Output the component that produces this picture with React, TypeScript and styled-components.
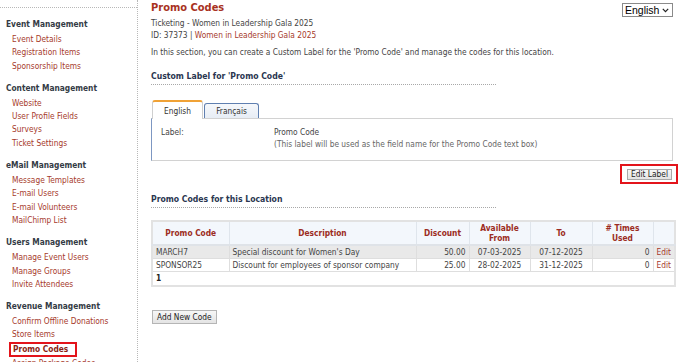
import React from "react";
import styled, { createGlobalStyle } from "styled-components";

const Global = createGlobalStyle`
  html, body { margin: 0; padding: 0; background: #fff; }
  body {
    font-family: "DejaVu Sans Condensed", "DejaVu Sans", Verdana, sans-serif;
    font-size: 8.3px;
    color: #444;
  }
  * { box-sizing: border-box; }
`;

const RED = "#a63a2c";
const NAVY = "#2a3650";

const Page = styled.div`
  display: flex;
  width: 688px;
  height: 362px;
  overflow: hidden;
`;

const Sidebar = styled.nav`
  width: 138px;
  flex: none;
  border-right: 1px dotted #b8b8b8;
  padding-top: 7px;
`;

const TopRule = styled.div`
  border-top: 1px dotted #b8b8b8;
  margin-bottom: 10px;
`;

const Group = styled.div`
  margin-bottom: 9px;
`;

const GroupTitle = styled.div`
  font-weight: bold;
  color: #343b45;
  line-height: 13px;
  padding-left: 6px;
  margin-bottom: 2px;
`;

const NavItem = styled.a<{ $active?: boolean }>`
  display: block;
  padding-left: 12px;
  line-height: 13.3px;
  color: ${RED};
  text-decoration: none;
  white-space: nowrap;
  font-weight: ${(p) => (p.$active ? "bold" : "normal")};
`;

const Highlight = styled.span`
  display: inline-block;
  border: 2px solid #e3141b;
  margin-left: -3px;
  padding: 0 7px 0 2px;
  line-height: 11px;
  color: #8a1d12;
`;

const Main = styled.main`
  flex: 1;
  padding: 0 15px 0 13px;
  min-width: 0;
`;

const Header = styled.div`
  display: flex;
  justify-content: space-between;
  align-items: flex-start;
`;

const Title = styled.h1`
  margin: 0 0 2px;
  font-size: 11px;
  line-height: 16px;
  color: #a8321e;
  font-weight: bold;
`;

const SubLine = styled.div`
  line-height: 11.5px;
  color: #444;
`;

const Link = styled.a`
  color: ${RED};
  text-decoration: none;
`;

const SelectWrap = styled.div`
  position: relative;
  margin-top: 3px;
  width: 51px;
  height: 14px;
`;

const LangSelect = styled.select`
  appearance: none;
  -webkit-appearance: none;
  width: 100%;
  height: 100%;
  font-family: "Liberation Sans", Arial, sans-serif;
  font-size: 10.5px;
  line-height: 12px;
  padding: 0 0 0 2px;
  border: 1px solid #8a8a8a;
  border-radius: 0;
  color: #000;
  background: #fff;
  outline: none;
`;

const Chevron = styled.svg`
  position: absolute;
  right: 4px;
  top: 5px;
  width: 7px;
  height: 5px;
  pointer-events: none;
`;

const Intro = styled.p`
  margin: 5px 0 0;
  line-height: 12px;
`;

const SectionHeading = styled.h2<{ $top: number }>`
  margin: ${(p) => p.$top}px 0 0;
  width: 345px;
  font-size: 8.6px;
  line-height: 12px;
  font-weight: bold;
  color: ${NAVY};
  padding-bottom: 2px;
  border-bottom: 1px dotted #a8a8a8;
`;

const Tabs = styled.div`
  display: flex;
  align-items: flex-end;
  gap: 1px;
  margin-top: 15px;
  padding-left: 1px;
`;

const Tab = styled.div<{ $active?: boolean }>`
  height: ${(p) => (p.$active ? 19 : 15)}px;
  width: ${(p) => (p.$active ? 51 : 55)}px;
  display: flex;
  align-items: center;
  justify-content: center;
  border-radius: 3px 3px 0 0;
  color: #333;
  position: relative;
  ${(p) =>
    p.$active
      ? `
    background: #fff;
    border: 1px solid #cfcfcf;
    border-top: 2px solid #f0a236;
    border-bottom: none;
    margin-bottom: -1px;
    z-index: 1;
  `
      : `
    background: linear-gradient(#f6f8fb, #e7edf5);
    border: 1px solid #5f7fb0;
    border-bottom: none;
  `}
`;

const Panel = styled.div`
  border: 1px solid #d2d2d2;
  border-left: 1px solid #7d97c2;
  padding: 7px 9px 10px;
  display: grid;
  grid-template-columns: 113px 1fr;
  line-height: 12px;
`;

const Hint = styled.div`
  color: #666;
`;

const ButtonRow = styled.div`
  display: flex;
  justify-content: flex-end;
  margin-top: 3px;
  margin-right: -5px;
`;

const RedBox = styled.div`
  border: 2px solid #e3141b;
  padding: 3px 4px 2px 5px;
`;

const Button = styled.button`
  font-family: inherit;
  font-size: 8.3px;
  height: 11px;
  line-height: 9px;
  padding: 0 3px;
  color: #222;
  background: linear-gradient(#f7f7f7, #e4e4e4);
  border: 1px solid #a9a9a9;
  border-radius: 0;
  display: block;
  white-space: nowrap;
`;

const AddButton = styled(Button)`
  height: 14px;
  line-height: 12px;
  padding: 0 4px;
  margin-top: 23px;
  margin-left: 1px;
  border-color: #b5b5b5;
`;

const Table = styled.table`
  margin-top: 12px;
  width: 523px;
  border-collapse: collapse;
  border: 2px solid #e2e2e2;
  table-layout: fixed;
`;

const Th = styled.th`
  background: #f3f7fc;
  color: #9c2c22;
  font-weight: bold;
  text-align: center;
  height: 24px;
  line-height: 10.5px;
  padding: 0 2px;
  border: 1px solid #dfe5ec;
  border-bottom: 2px solid #dfe3e8;
`;

const Tr = styled.tr<{ $shade?: boolean }>`
  background: ${(p) => (p.$shade ? "#e9e9e9" : "#fff")};
`;

const Td = styled.td<{ $align?: "left" | "right" | "center" }>`
  text-align: ${(p) => p.$align || "left"};
  padding: 0 3px;
  height: 13px;
  line-height: 12px;
  border: 1px solid #dedede;
  color: #444;
  white-space: nowrap;
  overflow: hidden;
`;

const FootTd = styled.td`
  height: 14px;
  padding: 0 3px;
  font-weight: bold;
  color: #222;
  border-top: 1px solid #dedede;
`;

const sections = [
  {
    title: "Event Management",
    items: ["Event Details", "Registration Items", "Sponsorship Items"],
  },
  {
    title: "Content Management",
    items: ["Website", "User Profile Fields", "Surveys", "Ticket Settings"],
  },
  {
    title: "eMail Management",
    items: ["Message Templates", "E-mail Users", "E-mail Volunteers", "MailChimp List"],
  },
  {
    title: "Users Management",
    items: ["Manage Event Users", "Manage Groups", "Invite Attendees"],
  },
  {
    title: "Revenue Management",
    items: ["Confirm Offline Donations", "Store Items", "Promo Codes", "Assign Package Codes"],
  },
];

const codes = [
  {
    code: "MARCH7",
    desc: "Special discount for Women's Day",
    discount: "50.00",
    from: "07-03-2025",
    to: "07-12-2025",
    used: "0",
  },
  {
    code: "SPONSOR25",
    desc: "Discount for employees of sponsor company",
    discount: "25.00",
    from: "28-02-2025",
    to: "31-12-2025",
    used: "0",
  },
];

export default function App() {
  return (
    <>
      <Global />
      <Page>
        <Sidebar>
          <TopRule />
          {sections.map((s) => (
            <Group key={s.title}>
              <GroupTitle>{s.title}</GroupTitle>
              {s.items.map((it) =>
                it === "Promo Codes" ? (
                  <NavItem key={it} $active>
                    <Highlight>{it}</Highlight>
                  </NavItem>
                ) : (
                  <NavItem key={it}>{it}</NavItem>
                )
              )}
            </Group>
          ))}
        </Sidebar>
        <Main>
          <Header>
            <div>
              <Title>Promo Codes</Title>
              <SubLine>Ticketing - Women in Leadership Gala 2025</SubLine>
              <SubLine>
                ID: 37373 | <Link>Women in Leadership Gala 2025</Link>
              </SubLine>
            </div>
            <SelectWrap>
              <LangSelect defaultValue="en">
                <option value="en">English</option>
                <option value="fr">Français</option>
              </LangSelect>
              <Chevron viewBox="0 0 7 5">
                <path d="M0.8 0.8 L3.5 3.6 L6.2 0.8" fill="none" stroke="#222" strokeWidth="1.2" />
              </Chevron>
            </SelectWrap>
          </Header>
          <Intro>
            In this section, you can create a Custom Label for the 'Promo Code' and manage the codes
            for this location.
          </Intro>
          <SectionHeading $top={12}>Custom Label for 'Promo Code'</SectionHeading>
          <Tabs>
            <Tab $active>English</Tab>
            <Tab>Français</Tab>
          </Tabs>
          <Panel>
            <div>Label:</div>
            <div>Promo Code</div>
            <div />
            <Hint>(This label will be used as the field name for the Promo Code text box)</Hint>
          </Panel>
          <ButtonRow>
            <RedBox>
              <Button>Edit Label</Button>
            </RedBox>
          </ButtonRow>
          <SectionHeading $top={9}>Promo Codes for this Location</SectionHeading>
          <Table>
            <colgroup>
              <col style={{ width: 77 }} />
              <col style={{ width: 187 }} />
              <col style={{ width: 53 }} />
              <col style={{ width: 61 }} />
              <col style={{ width: 62 }} />
              <col style={{ width: 61 }} />
              <col style={{ width: 22 }} />
            </colgroup>
            <thead>
              <tr>
                <Th>Promo Code</Th>
                <Th>Description</Th>
                <Th>Discount</Th>
                <Th>
                  Available
                  <br />
                  From
                </Th>
                <Th>To</Th>
                <Th>
                  # Times
                  <br />
                  Used
                </Th>
                <Th />
              </tr>
            </thead>
            <tbody>
              {codes.map((c, i) => (
                <Tr key={c.code} $shade={i === 0}>
                  <Td>{c.code}</Td>
                  <Td>{c.desc}</Td>
                  <Td $align="right">{c.discount}</Td>
                  <Td $align="center">{c.from}</Td>
                  <Td $align="center">{c.to}</Td>
                  <Td $align="right">{c.used}</Td>
                  <Td>
                    <Link>Edit</Link>
                  </Td>
                </Tr>
              ))}
              <tr>
                <FootTd colSpan={7}>1</FootTd>
              </tr>
            </tbody>
          </Table>
          <AddButton>Add New Code</AddButton>
        </Main>
      </Page>
    </>
  );
}
